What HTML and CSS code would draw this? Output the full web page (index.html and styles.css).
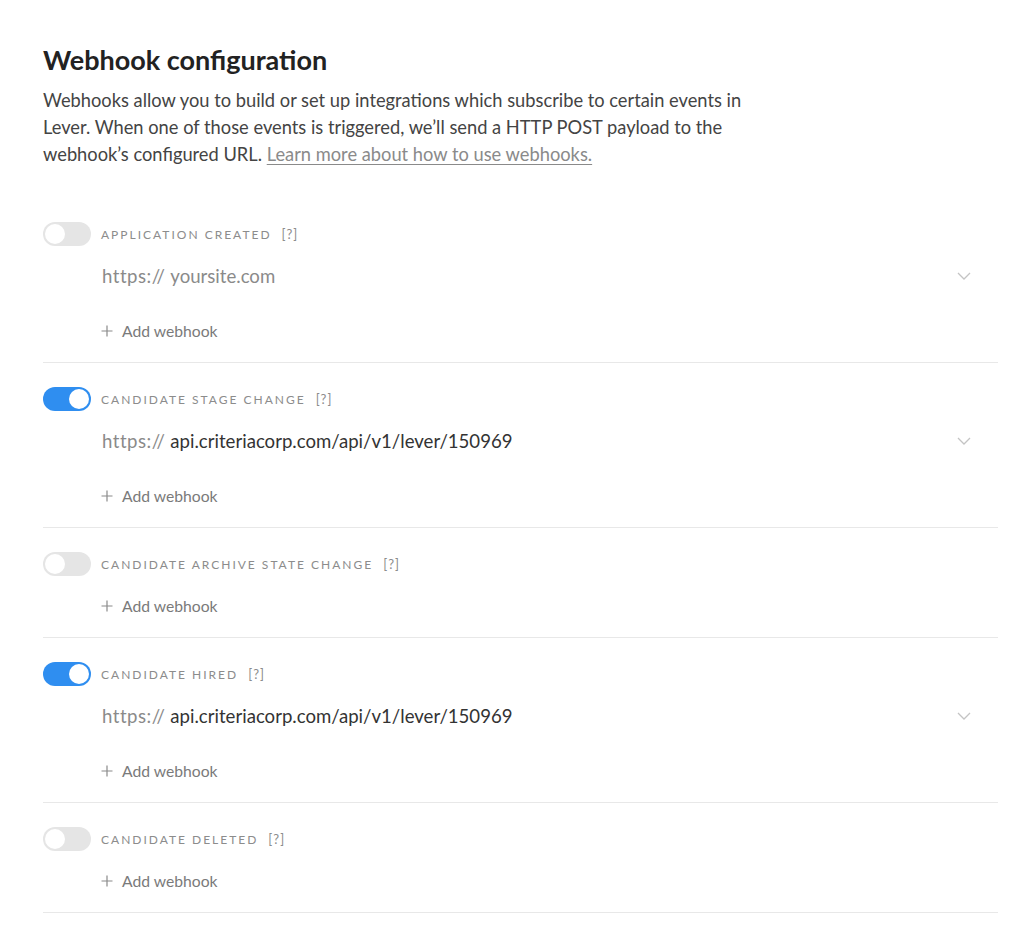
FILE: index.html
```html
<!DOCTYPE html>
<html lang="en">
<head>
    <meta charset="UTF-8">
    <title>Webhook configuration</title>
    <link rel="stylesheet" href="styles.css">
</head>
<body>
    <div class="container">
        <h1>Webhook configuration</h1>
        <p class="intro">
            Webhooks allow you to build or set up integrations which subscribe to certain events in<br>
            Lever. When one of those events is triggered, we’ll send a HTTP POST payload to the<br>
            webhook’s configured URL. <a href="#">Learn more about how to use webhooks.</a>
        </p>

        <div class="hooks">
            <div class="hook">
                <div class="hook-head">
                    <span class="toggle"></span>
                    <span class="hook-name">Application created</span>
                    <span class="help">[?]</span>
                </div>
                <div class="url-row">
                    <span class="prefix">https://</span>
                    <span class="url placeholder">yoursite.com</span>
                    <svg class="chevron" width="14" height="8" viewBox="0 0 14 8"><path d="M1 1l6 6 6-6" fill="none" stroke="#c4c4c4" stroke-width="1.3"/></svg>
                </div>
                <div class="add-row"><svg class="plus" width="12" height="12" viewBox="0 0 12 12"><path d="M6 0.5v11M0.5 6h11" stroke="#8a8a8a" stroke-width="1.2"/></svg>Add webhook</div>
            </div>

            <div class="hook">
                <div class="hook-head">
                    <span class="toggle on"></span>
                    <span class="hook-name">Candidate stage change</span>
                    <span class="help">[?]</span>
                </div>
                <div class="url-row">
                    <span class="prefix">https://</span>
                    <span class="url">api.criteriacorp.com/api/v1/lever/150969</span>
                    <svg class="chevron" width="14" height="8" viewBox="0 0 14 8"><path d="M1 1l6 6 6-6" fill="none" stroke="#c4c4c4" stroke-width="1.3"/></svg>
                </div>
                <div class="add-row"><svg class="plus" width="12" height="12" viewBox="0 0 12 12"><path d="M6 0.5v11M0.5 6h11" stroke="#8a8a8a" stroke-width="1.2"/></svg>Add webhook</div>
            </div>

            <div class="hook">
                <div class="hook-head">
                    <span class="toggle"></span>
                    <span class="hook-name">Candidate archive state change</span>
                    <span class="help">[?]</span>
                </div>
                <div class="add-row"><svg class="plus" width="12" height="12" viewBox="0 0 12 12"><path d="M6 0.5v11M0.5 6h11" stroke="#8a8a8a" stroke-width="1.2"/></svg>Add webhook</div>
            </div>

            <div class="hook">
                <div class="hook-head">
                    <span class="toggle on"></span>
                    <span class="hook-name">Candidate hired</span>
                    <span class="help">[?]</span>
                </div>
                <div class="url-row">
                    <span class="prefix">https://</span>
                    <span class="url">api.criteriacorp.com/api/v1/lever/150969</span>
                    <svg class="chevron" width="14" height="8" viewBox="0 0 14 8"><path d="M1 1l6 6 6-6" fill="none" stroke="#c4c4c4" stroke-width="1.3"/></svg>
                </div>
                <div class="add-row"><svg class="plus" width="12" height="12" viewBox="0 0 12 12"><path d="M6 0.5v11M0.5 6h11" stroke="#8a8a8a" stroke-width="1.2"/></svg>Add webhook</div>
            </div>

            <div class="hook">
                <div class="hook-head">
                    <span class="toggle"></span>
                    <span class="hook-name">Candidate deleted</span>
                    <span class="help">[?]</span>
                </div>
                <div class="add-row"><svg class="plus" width="12" height="12" viewBox="0 0 12 12"><path d="M6 0.5v11M0.5 6h11" stroke="#8a8a8a" stroke-width="1.2"/></svg>Add webhook</div>
            </div>
        </div>
    </div>
</body>
</html>
```

FILE: styles.css
```css
:root {
    --text-color: #222222;
    --muted: #8a8a8a;
    --accent-color: #2f8ef0;
    --divider: #e8e8e8;
}

* {
    margin: 0;
    padding: 0;
    box-sizing: border-box;
}

body {
    font-family: 'Lato', 'Noto Sans', sans-serif;
    background: white;
    color: var(--text-color);
}

.container {
    padding: 44px 33px 0 43px;
}

h1 {
    font-size: 27px;
    font-weight: 700;
    line-height: 32px;
    color: #222;
    margin-bottom: 11px;
}

.intro {
    font-size: 18.3px;
    line-height: 27px;
    color: #444;
    margin-bottom: 30px;
}

.intro a {
    color: var(--muted);
    text-decoration: underline;
    text-underline-offset: 3px;
}

.hook {
    padding: 24px 0 11px;
    border-bottom: 1px solid var(--divider);
}

.hook-head {
    display: flex;
    align-items: center;
    height: 24px;
    margin-bottom: 10px;
}

.toggle {
    position: relative;
    width: 48px;
    height: 24px;
    border-radius: 12px;
    background: #e5e5e5;
    flex-shrink: 0;
    margin-right: 10px;
}

.toggle::after {
    content: '';
    position: absolute;
    top: 2px;
    left: 2px;
    width: 20px;
    height: 20px;
    border-radius: 50%;
    background: white;
}

.toggle.on {
    background: var(--accent-color);
}

.toggle.on::after {
    left: 26px;
}

.hook-name {
    font-size: 12px;
    text-transform: uppercase;
    letter-spacing: 2px;
    color: #8c8c8c;
}

.help {
    font-size: 13px;
    color: #8c8c8c;
    letter-spacing: 1px;
    margin-left: 10px;
}

.url-row {
    display: flex;
    align-items: center;
    height: 40px;
    margin: 0 27px 15px 59px;
    font-size: 18.6px;
}

.prefix {
    color: var(--muted);
    letter-spacing: 0.5px;
    margin-right: 5px;
}

.url {
    flex: 1;
    color: #333;
}

.url.placeholder {
    color: var(--muted);
}

.chevron {
    flex-shrink: 0;
}

.add-row {
    display: flex;
    align-items: center;
    height: 40px;
    margin-left: 58px;
    font-size: 15.7px;
    color: #7a7a7a;
}

.plus {
    margin-right: 9px;
    flex-shrink: 0;
}
```
